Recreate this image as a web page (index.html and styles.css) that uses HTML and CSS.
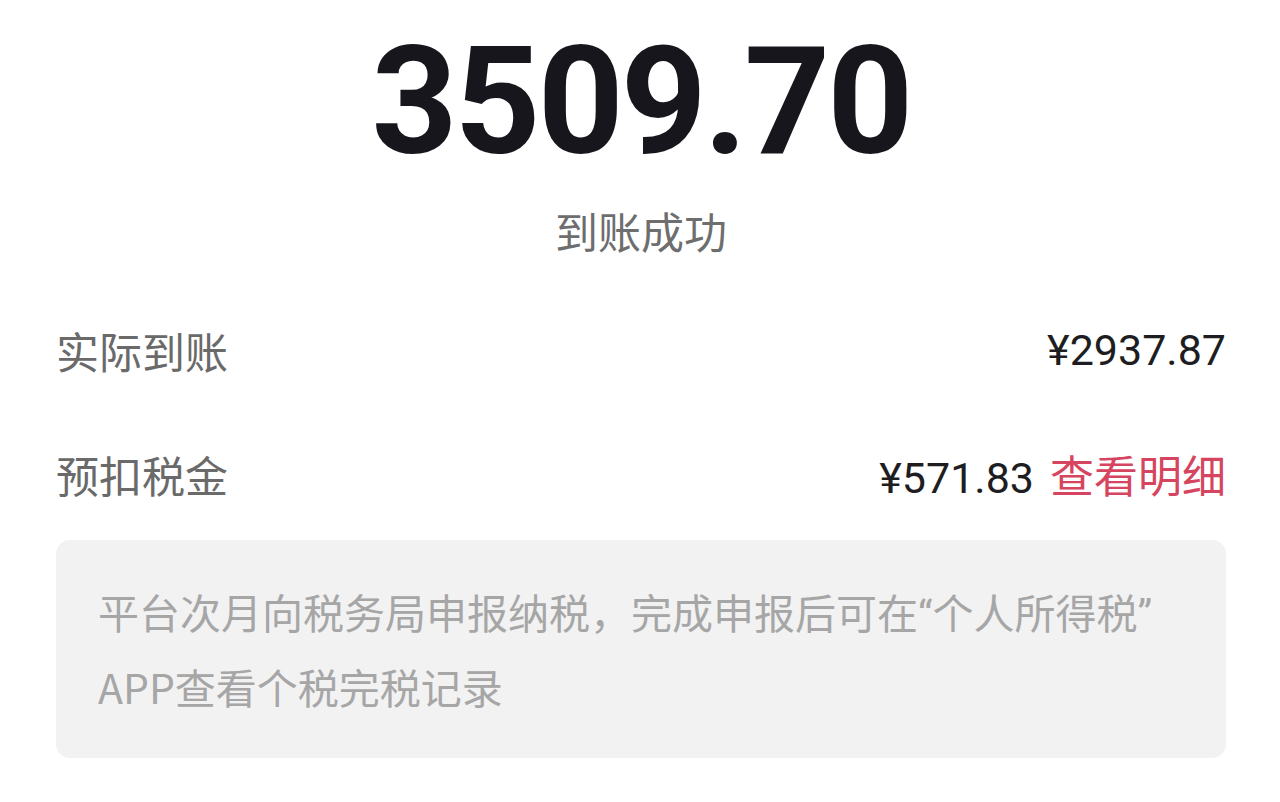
FILE: index.html
```html
<!DOCTYPE html>
<html lang="zh-CN">
<head>
    <meta charset="UTF-8">
    <meta name="viewport" content="width=device-width, initial-scale=1.0">
    <title>到账详情</title>
    <link rel="stylesheet" href="styles.css">
</head>
<body>
    <div class="page">
        <div class="amount">3509.70</div>
        <div class="status">到账成功</div>

        <div class="rows">
            <div class="row">
                <span class="label">实际到账</span>
                <span class="value">¥2937.87</span>
            </div>
            <div class="row">
                <span class="label">预扣税金</span>
                <span class="value">¥571.83<a class="detail" href="#">查看明细</a></span>
            </div>
        </div>

        <div class="notice">
            <span class="line">平台次月向税务局申报纳税，完成申报后可在<span class="quote">“</span>个人所得税<span class="quote">”</span></span>
            <span class="line">APP查看个税完税记录</span>
        </div>
    </div>
</body>
</html>
```

FILE: styles.css
```css
body {
    margin: 0;
    background-color: #fff;
    font-family: "Noto Sans CJK SC", "Noto Sans", sans-serif;
}
.page {
    padding: 0 54px 0 56px;
}
.amount {
    margin-top: 27px;
    text-align: center;
    font-family: Roboto, "Noto Sans", sans-serif;
    font-weight: 700;
    font-size: 150px;
    line-height: 150px;
    letter-spacing: -3px;
    color: #16161c;
}
.status {
    margin-top: 23px;
    text-align: center;
    font-size: 43px;
    line-height: 60px;
    color: #6e6e6e;
}
.rows {
    margin-top: 28px;
}
.row {
    display: flex;
    justify-content: space-between;
    align-items: center;
    height: 124px;
}
.label {
    font-size: 43px;
    color: #6a6a6a;
}
.value {
    font-family: Roboto, "Noto Sans CJK SC", sans-serif;
    font-size: 43px;
    color: #1e1e22;
}
.detail {
    margin-left: 16px;
    font-family: "Noto Sans CJK SC", sans-serif;
    font-size: 44px;
    color: #d6455f;
    text-decoration: none;
}
.notice {
    margin-top: 4px;
    padding: 36px 42px 36px;
    background-color: #f2f2f2;
    border-radius: 14px;
    font-size: 41px;
    line-height: 71px;
    color: #a6a6a6;
}
.notice .line {
    display: block;
    white-space: nowrap;
}
.quote {
    font-family: Roboto, sans-serif;
}
```
